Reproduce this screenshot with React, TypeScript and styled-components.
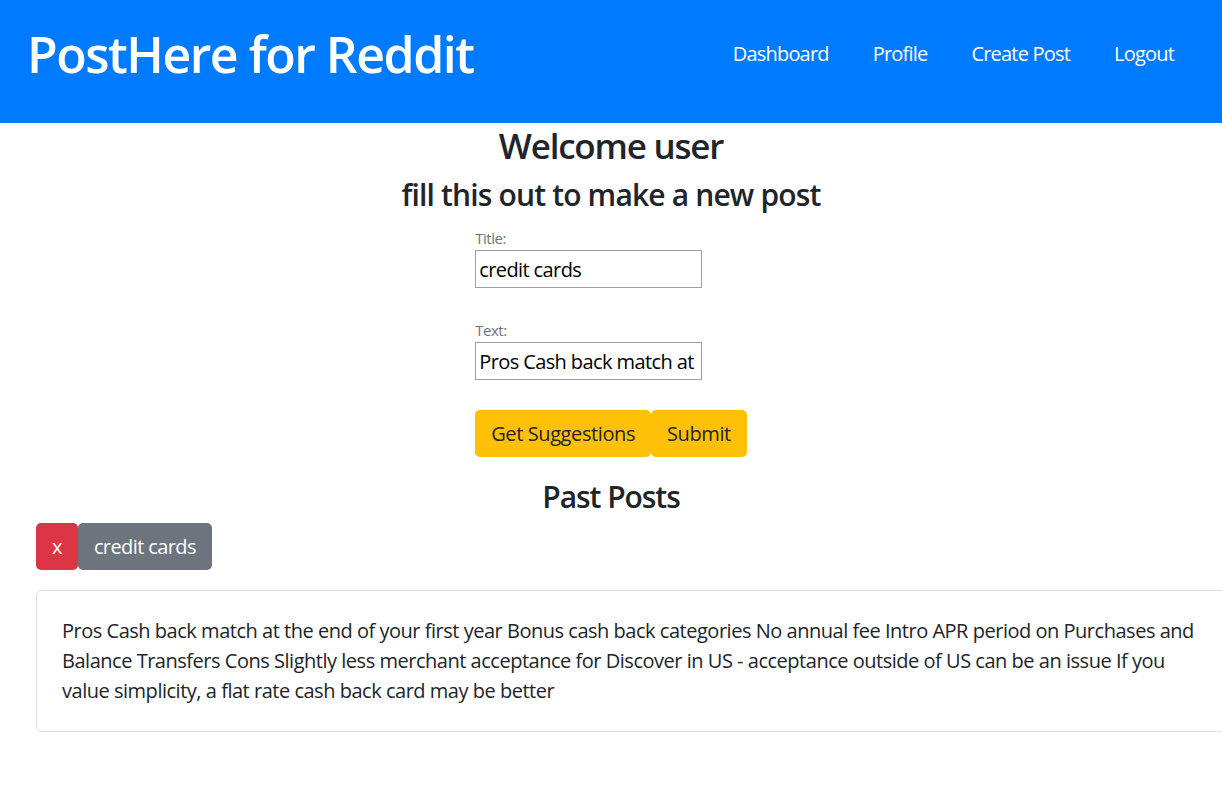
import React from "react";
import styled, { createGlobalStyle } from "styled-components";

const Global = createGlobalStyle`
  html, body { margin: 0; padding: 0; background: #fff; }
  body {
    font-family: "Open Sans", "Noto Sans", Arial, sans-serif;
    color: #212529;
    overflow-x: hidden;
    letter-spacing: -0.03em;
  }
  * { box-sizing: border-box; }
`;

const Navbar = styled.nav`
  display: flex;
  align-items: center;
  justify-content: space-between;
  height: 123px;
  padding: 0 48px 15px 27px;
  background: #007bff;
`;

const Brand = styled.h1`
  margin: 0;
  font-size: 50px;
  font-weight: 600;
  line-height: 1.2;
  letter-spacing: -0.03em;
  color: #fff;
`;

const NavLinks = styled.div`
  display: flex;
  gap: 44px;
`;

const NavLink = styled.a`
  color: #fff;
  font-size: 20px;
  line-height: 30px;
  letter-spacing: -0.04em;
  text-decoration: none;
`;

const Main = styled.main`
  display: flex;
  flex-direction: column;
  align-items: center;
  padding-top: 2px;
`;

const Heading = styled.h2<{ $size: number; $mt?: number; $mb?: number; $ls?: number }>`
  margin: ${(p) => p.$mt ?? 0}px 0 ${(p) => p.$mb ?? 10}px;
  font-size: ${(p) => p.$size}px;
  font-weight: 600;
  line-height: 1.2;
  letter-spacing: ${(p) => p.$ls ?? -0.035}em;
  color: #212529;
  text-align: center;
`;

const Form = styled.form`
  display: flex;
  flex-direction: column;
  align-items: flex-start;
  margin-top: 3px;
`;

const Field = styled.div<{ $mb: number }>`
  display: flex;
  flex-direction: column;
  margin-bottom: ${(p) => p.$mb}px;
`;

const Label = styled.label`
  font-size: 15px;
  line-height: 24px;
  color: #6c757d;
`;

const Input = styled.input`
  width: 227px;
  height: 38px;
  padding: 1px 3px;
  font-family: inherit;
  font-size: 20px;
  letter-spacing: -0.03em;
  color: #000;
  border: 1px solid #a0a0a0;
  border-radius: 0;
  outline: none;
`;

const ButtonRow = styled.div`
  display: flex;
`;

const Btn = styled.button<{ $variant: "warning" | "danger" | "secondary" }>`
  font-family: inherit;
  font-size: 20px;
  line-height: 30px;
  letter-spacing: ${(p) => (p.$variant === "warning" ? "-0.02em" : "-0.03em")};
  padding: 7.5px 15px;
  border: 1px solid transparent;
  border-radius: 5px;
  cursor: pointer;
  background: ${(p) =>
    p.$variant === "warning" ? "#ffc107" : p.$variant === "danger" ? "#dc3545" : "#6c757d"};
  color: ${(p) => (p.$variant === "warning" ? "#212529" : "#fff")};
`;

const Posts = styled.section`
  align-self: stretch;
  padding-left: 36px;
  margin-right: -10px;
`;

const PostActions = styled.div`
  display: flex;
`;

const Card = styled.div`
  margin-top: 20px;
  padding: 25px;
  border: 1px solid rgba(0, 0, 0, 0.125);
  border-radius: 5px;
  font-size: 20px;
  line-height: 30px;
  color: #212529;
`;

const postText =
  "Pros Cash back match at the end of your first year Bonus cash back categories No annual fee Intro APR period on Purchases and Balance Transfers Cons Slightly less merchant acceptance for Discover in US - acceptance outside of US can be an issue If you value simplicity, a flat rate cash back card may be better";

export default function App() {
  return (
    <>
      <Global />
      <Navbar>
        <Brand>PostHere for Reddit</Brand>
        <NavLinks>
          <NavLink href="#">Dashboard</NavLink>
          <NavLink href="#">Profile</NavLink>
          <NavLink href="#">Create Post</NavLink>
          <NavLink href="#">Logout</NavLink>
        </NavLinks>
      </Navbar>
      <Main>
        <Heading $size={35}>Welcome user</Heading>
        <Heading as="h4" $size={30} $ls={-0.028}>
          fill this out to make a new post
        </Heading>
        <Form onSubmit={(e) => e.preventDefault()}>
          <Field $mb={30}>
            <Label>Title:</Label>
            <Input defaultValue="credit cards" />
          </Field>
          <Field $mb={30}>
            <Label>Text:</Label>
            <Input defaultValue={postText} />
          </Field>
          <ButtonRow>
            <Btn $variant="warning" type="button">Get Suggestions</Btn>
            <Btn $variant="warning" type="submit">Submit</Btn>
          </ButtonRow>
        </Form>
        <Heading as="h4" $size={30} $mt={22} $mb={8}>
          Past Posts
        </Heading>
        <Posts>
          <PostActions>
            <Btn $variant="danger">x</Btn>
            <Btn $variant="secondary">credit cards</Btn>
          </PostActions>
          <Card>{postText}</Card>
        </Posts>
      </Main>
    </>
  );
}
